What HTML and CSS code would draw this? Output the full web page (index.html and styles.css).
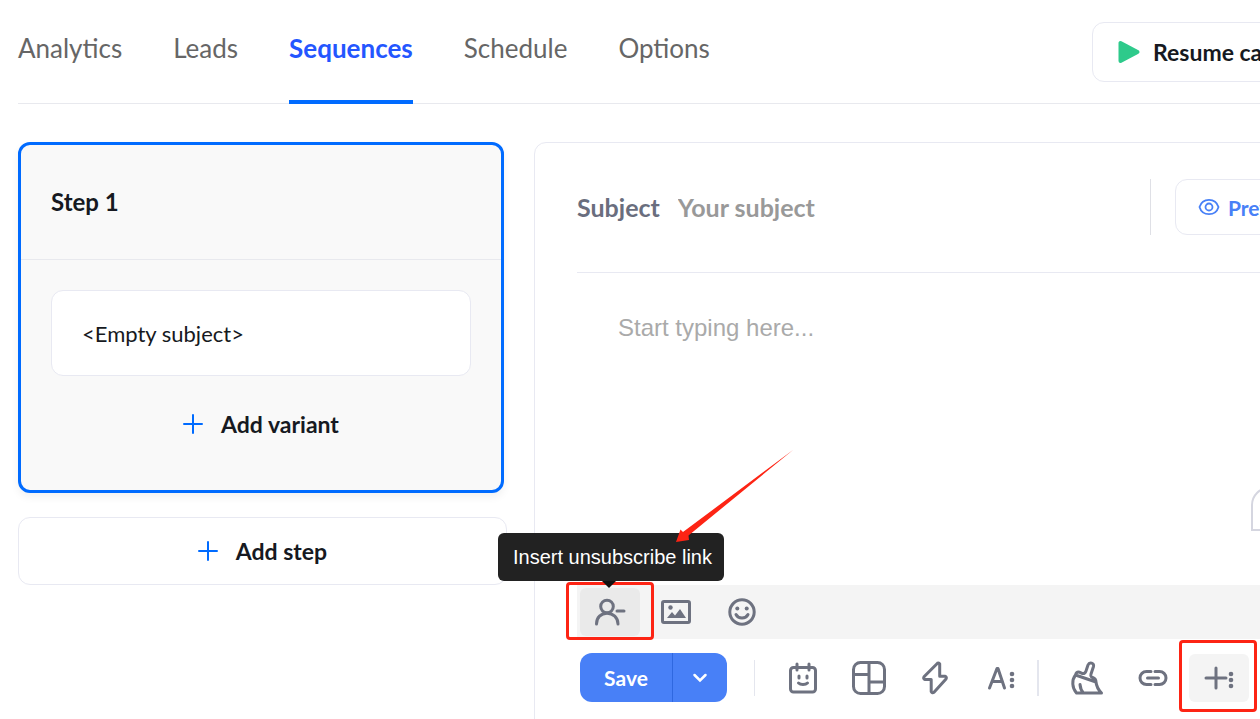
FILE: index.html
```
<!DOCTYPE html>
<html lang="en">
<head>
    <meta charset="UTF-8">
    <meta name="viewport" content="width=device-width, initial-scale=1.0">
    <title>Sequences</title>
    <link rel="stylesheet" href="styles.css">
</head>
<body>

    <div class="page">

        <!-- Tabs -->
        <header class="header">
            <nav class="tabs">
                <a href="#" class="tab">Analytics</a>
                <a href="#" class="tab">Leads</a>
                <a href="#" class="tab active">Sequences</a>
                <a href="#" class="tab">Schedule</a>
                <a href="#" class="tab">Options</a>
            </nav>
            <button class="resume" type="button">
                <svg width="24" height="26" viewBox="0 0 24 26"><path d="M3.500 4v18L20.500 13z" fill="#2eca8b" stroke="#2eca8b" stroke-width="4" stroke-linejoin="round"/></svg>
                Resume campaign
            </button>
        </header>

        <main class="content">

            <!-- Steps -->
            <section class="steps">
                <div class="step-card">
                    <h2>Step 1</h2>
                    <div class="step-body">
                        <button class="variant" type="button">&lt;Empty subject&gt;</button>
                        <button class="add" type="button">
                            <svg class="plus" width="20" height="20" viewBox="0 0 20 20"><path d="M10 1v18M1 10h18"/></svg>
                            Add variant
                        </button>
                    </div>
                </div>
                <button class="add add-step" type="button">
                    <svg class="plus" width="20" height="20" viewBox="0 0 20 20"><path d="M10 1v18M1 10h18"/></svg>
                    Add step
                </button>
            </section>

            <!-- Editor -->
            <section class="editor">
                <div class="subject-row">
                    <label for="subject">Subject</label>
                    <input id="subject" type="text" placeholder="Your subject">
                    <div class="preview-wrap">
                        <button class="preview" type="button">
                            <svg width="22" height="18" viewBox="0 0 22 18" fill="none" stroke="#4880f7" stroke-width="1.800"><path d="M1.500 9C3 4 7 1.800 11 1.800S19 4 20.500 9C19 14 15 16.200 11 16.200S3 14 1.500 9z"/><circle cx="11" cy="9" r="3.500"/></svg>
                            Preview
                        </button>
                    </div>
                </div>

                <div class="message">
                    <textarea aria-label="Message" placeholder="Start typing here..."></textarea>
                    <div class="bubble"></div>
                </div>

                <div class="extras">
                    <button class="icon-btn pressed" type="button" aria-label="Insert unsubscribe link">
                        <svg width="32" height="30" viewBox="0 0 32 30"><circle cx="13" cy="9.500" r="6.300"/><path d="M2.500 27c0-6.500 4.500-10.800 10.500-10.800S24 20.500 24 27M23 14h7"/></svg>
                        <span class="mark"></span>
                    </button>
                    <button class="icon-btn" type="button" aria-label="Insert image">
                        <svg width="32" height="26" viewBox="0 0 32 26"><rect x="2.500" y="2.500" width="27" height="21" rx="1.500"/><circle class="solid" cx="10.500" cy="8.500" r="2.200"/><path class="solid" d="M7 19l5-6 3 3.500 5-6.500 6 9z"/></svg>
                    </button>
                    <button class="icon-btn" type="button" aria-label="Insert emoji">
                        <svg width="30" height="30" viewBox="0 0 30 30"><circle cx="15" cy="15" r="12.200"/><circle class="solid" cx="10.300" cy="11.500" r="2"/><circle class="solid" cx="19.700" cy="11.500" r="2"/><path d="M9 17.500c2.500 4.700 9.500 4.700 12 0"/></svg>
                    </button>
                    <div class="tooltip" role="tooltip">Insert unsubscribe link</div>
                    <svg class="arrow" width="120" height="96" viewBox="0 0 120 96"><path d="M118 1L13.500 86.500 14 91 1 93 5.500 80.500 8 83z" fill="#fd2414"/></svg>
                </div>

                <div class="toolbar">
                    <div class="save-group">
                        <button class="save" type="button">Save</button>
                        <button class="save-more" type="button" aria-label="More save options">
                            <svg width="16" height="10" viewBox="0 0 16 10"><path d="M2.500 2L8 7.500 13.500 2" fill="none" stroke="#fff" stroke-width="2.500" stroke-linecap="round"/></svg>
                        </button>
                    </div>
                    <span class="divider first"></span>
                    <div class="tools">
                        <button class="icon-btn" type="button" aria-label="Assistant">
                            <svg width="30" height="32" viewBox="0 0 30 32"><rect x="2.500" y="5.500" width="25" height="24.500" rx="3"/><path d="M9 2v6M21 2v6M11 14v2M19 14v2M10.500 21c2 2 7 2 9 0"/></svg>
                        </button>
                        <button class="icon-btn" type="button" aria-label="Templates">
                            <svg width="36" height="36" viewBox="0 0 36 36"><rect x="2.500" y="2.500" width="31" height="31" rx="7"/><path d="M18 2.500v31M2.500 14.500H18M18 22h15.500"/></svg>
                        </button>
                        <button class="icon-btn" type="button" aria-label="Variables">
                            <svg width="26" height="34" viewBox="0 0 26 34"><path d="M15.500 2.200L2 15.800q-1 2.200 1 2.700h6.200v12q1 2 2.800.700L24 18q1-2.200-1-2.700h-5.300V3q-.700-1.500-2.200-.800z"/></svg>
                        </button>
                        <button class="icon-btn" type="button" aria-label="Text style">
                            <svg width="28" height="28" viewBox="0 0 28 28"><path d="M2.500 24L10 4.500h1L17.500 24M5.500 17.500h10"/><g class="solid"><circle cx="25" cy="10" r="2.300"/><circle cx="25" cy="16" r="2.300"/><circle cx="25" cy="22" r="2.300"/></g></svg>
                        </button>
                    </div>
                    <span class="divider"></span>
                    <div class="tools">
                        <button class="icon-btn" type="button" aria-label="Clear formatting">
                            <svg width="34" height="36" viewBox="0 0 34 36"><path d="M5.500 15C1.500 20 2 28 6.500 33H31.500C28.500 30 26.500 27 26 22L5.500 15c.500-2 1.500-3 3-3 2 0 3.500 2 5.500 1.500 1.500-.500 2-2 2.500-4L18 5c1.500-3.500 6.500-2 5.500 1.500L21 14c-.500 2-.500 2.500 1.500 3.500 2.500 1 3.500 2.500 3.500 4.500M10 24.500c.300 3.500 1 6 3.500 8.500"/></svg>
                        </button>
                        <button class="icon-btn" type="button" aria-label="Insert link">
                            <svg width="30" height="20" viewBox="0 0 30 20"><path d="M13 3.500H8.500a6.500 6.500 0 0 0 0 13H13M17 3.500h4.500a6.500 6.500 0 0 1 0 13H17M9.500 10h11"/></svg>
                        </button>
                        <button class="icon-btn pressed light" type="button" aria-label="More">
                            <svg width="32" height="26" viewBox="0 0 32 26"><path d="M3 13h20M13 3v20"/><g class="solid"><circle cx="28" cy="9" r="2.300"/><circle cx="28" cy="15" r="2.300"/><circle cx="28" cy="21" r="2.300"/></g></svg>
                            <span class="mark"></span>
                        </button>
                    </div>
                </div>
            </section>

        </main>
    </div>

</body>
</html>
```
FILE: styles.css
```
* {
    margin: 0;
    padding: 0;
    box-sizing: border-box;
}

body {
    font-family: 'Lato', sans-serif;
    color: #161921;
    background: #fff;
    height: 100vh;
    overflow: hidden;
}

button {
    font-family: inherit;
    color: inherit;
    background: none;
    border: none;
    cursor: pointer;
    white-space: nowrap;
}

/* The workspace is wider than the window and runs off to the right */
.page {
    width: calc(100% + 120px);
    padding: 0 32px 0 18px;
}

/* Header */
.header {
    display: flex;
    justify-content: space-between;
    align-items: center;
    height: 104px;
    border-bottom: 1px solid #e8e9ee;
}

.tabs {
    display: flex;
    gap: 51px;
    height: 104px;
}

.tab {
    padding-top: 32px;
    font-size: 26px;
    line-height: 32px;
    color: #666;
    text-decoration: none;
    border-bottom: 4px solid transparent;
}

.tab.active {
    color: #2456ff;
    font-weight: 700;
    border-bottom-color: #006bff;
}

.resume {
    display: flex;
    align-items: center;
    gap: 12px;
    width: 256px;
    height: 60px;
    padding-left: 24px;
    font-size: 23px;
    font-weight: 700;
    border: 1px solid #e8e9f2;
    border-radius: 12px;
}

/* Content */
.content {
    display: flex;
    gap: 27px;
    padding-top: 38px;
}

.steps {
    width: 489px;
    flex-shrink: 0;
}

.step-card {
    margin-right: 3px;
    background: #f9f9f9;
    border: 3px solid #006bff;
    border-radius: 12px;
    box-shadow: 0 4px 8px rgba(0, 0, 0, 0.06);
}

.step-card h2 {
    padding: 42px 30px;
    font-size: 24px;
    line-height: 30px;
    border-bottom: 1px solid #e8e9ee;
}

.step-body {
    padding: 30px;
}

.variant {
    display: block;
    width: 100%;
    height: 86px;
    padding: 0 30px;
    font-size: 22px;
    text-align: left;
    background: #fff;
    border: 1px solid #e8e9f2;
    border-radius: 12px;
}

.add {
    display: flex;
    justify-content: center;
    align-items: center;
    gap: 18px;
    width: 100%;
    font-size: 23px;
    font-weight: 700;
}

.step-body .add {
    height: 48px;
    margin: 24px 0 12px;
}

.add-step {
    height: 68px;
    margin-top: 24px;
    border: 1px solid #e8e9f2;
    border-radius: 12px;
}

.plus {
    fill: none;
    stroke: #006bff;
    stroke-width: 2;
    stroke-linecap: round;
}

/* Editor */
.editor {
    flex: 1;
    min-width: 0;
    padding-left: 42px;
    border: 1px solid #e8e9f2;
    border-radius: 12px;
}

.subject-row {
    display: flex;
    align-items: center;
    gap: 18px;
    height: 130px;
    padding: 0 42px 1px 0;
    border-bottom: 1px solid #e8e9f2;
    font-size: 25px;
    font-weight: 700;
}

.subject-row label {
    color: #6a6e7e;
}

.subject-row input {
    flex: 1;
    min-width: 0;
    font: inherit;
    border: none;
    outline: none;
}

.subject-row input::placeholder {
    color: #999;
}

.preview-wrap {
    padding-left: 24px;
    border-left: 1px solid #dfe0e6;
}

.preview {
    display: flex;
    align-items: center;
    gap: 8px;
    width: 130px;
    height: 56px;
    padding-left: 22px;
    font-size: 21px;
    font-weight: 700;
    color: #4880f7;
    border: 1px solid #e8e9f2;
    border-radius: 12px;
}

.message {
    position: relative;
    height: 312px;
}

.message textarea {
    display: block;
    width: 100%;
    height: 100%;
    padding: 41px;
    font-family: 'Liberation Sans', Arial, sans-serif;
    font-size: 24px;
    line-height: 28px;
    border: none;
    outline: none;
    resize: none;
}

.message textarea::placeholder {
    color: #aaa;
}

.bubble {
    position: absolute;
    right: 60px;
    bottom: 54px;
    width: 36px;
    height: 44px;
    border: 2px solid #d5d6e0;
    border-radius: 24px 24px 0 0;
}

/* Formatting bars */
.extras {
    position: relative;
    display: flex;
    gap: 6px;
    padding: 3px;
    background: #f4f4f4;
}

.tools {
    display: flex;
    gap: 6px;
}

.icon-btn {
    position: relative;
    display: flex;
    justify-content: center;
    align-items: center;
    width: 60px;
    height: 48px;
    border-radius: 6px;
}

.icon-btn svg {
    fill: none;
    stroke: #6e7280;
    stroke-width: 3;
    stroke-linecap: round;
    stroke-linejoin: round;
}

.icon-btn .solid {
    fill: #6e7280;
    stroke: none;
}

.pressed {
    background: #eaeaea;
}

.pressed.light {
    background: #f4f4f4;
}

.mark {
    position: absolute;
    inset: -6px -14px -4px;
    border: 3px solid #fd2414;
    border-radius: 4px;
}

.light .mark {
    inset: -14px -8px -10px -10px;
}

.tooltip {
    position: absolute;
    left: -79px;
    bottom: 58px;
    padding: 10px 12px 10px 15px;
    font-family: 'Liberation Sans', Arial, sans-serif;
    font-size: 20px;
    line-height: 28px;
    color: #fff;
    background: #222;
    border-radius: 6px;
    white-space: nowrap;
}

.tooltip::after {
    content: '';
    position: absolute;
    top: 100%;
    left: 104px;
    border: 7px solid transparent;
    border-top-color: #111;
    border-bottom: none;
}

.arrow {
    position: absolute;
    left: 98px;
    bottom: 94px;
}

.toolbar {
    display: flex;
    align-items: center;
    padding: 14px 3px 30px;
}

.save-group {
    display: flex;
    height: 49px;
    color: #fff;
    background: #4880f7;
    border-radius: 12px;
}

.save {
    width: 92px;
    font-size: 21px;
    font-weight: 700;
}

.save-more {
    width: 55px;
    border-left: 1px solid #2f68e0;
}

.divider {
    width: 2px;
    height: 36px;
    margin: 0 18px 0 6px;
    background: #e4e6ee;
}

.divider.first {
    width: 1px;
    margin: 0 18px 0 27px;
}
```
